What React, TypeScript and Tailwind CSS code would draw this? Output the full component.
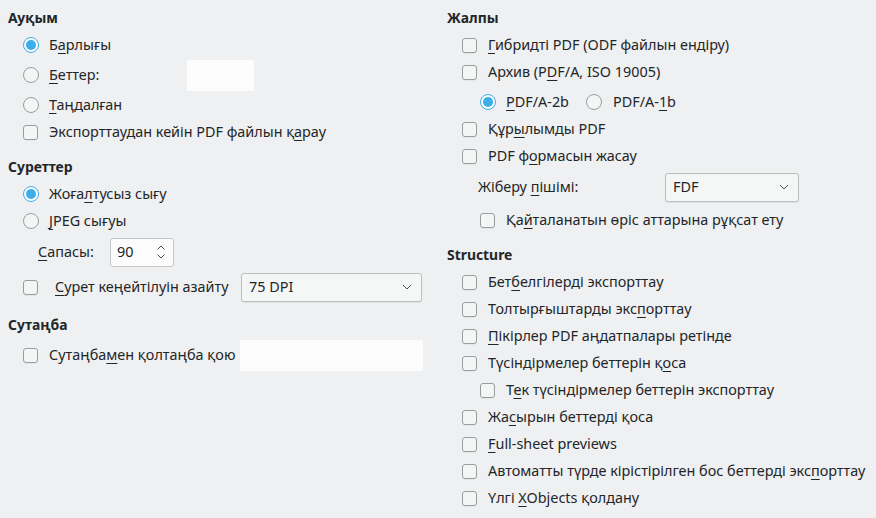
import React from "react";

const U = ({ c }: { c: string }) => (
  <span className="underline decoration-[1px] underline-offset-[3px]">{c}</span>
);

const Check = () => (
  <span className="inline-block w-[15px] h-[15px] shrink-0 rounded-[3px] border border-[#9a9c9f] bg-[#f4f5f5] shadow-[0_1px_0_rgba(0,0,0,0.04)]" />
);

const Radio = ({ on }: { on?: boolean }) =>
  on ? (
    <svg width="16" height="16" viewBox="0 0 16 16" className="shrink-0">
      <circle cx="8" cy="8" r="7.5" fill="#fcfcfc" stroke="#3daee9" strokeWidth="1" />
      <circle cx="8" cy="8" r="5" fill="#3daee9" />
    </svg>
  ) : (
    <svg width="16" height="16" viewBox="0 0 16 16" className="shrink-0">
      <circle cx="8" cy="8" r="7.5" fill="#f4f5f5" stroke="#9a9c9f" strokeWidth="1" />
    </svg>
  );

const Chevron = () => (
  <svg width="10" height="6" viewBox="0 0 10 6" className="shrink-0">
    <path d="M1 1 L5 5 L9 1" fill="none" stroke="#4d4f52" strokeWidth="1" />
  </svg>
);

const Combo = ({ text, w }: { text: string; w: string }) => (
  <div
    className={`${w} h-[29px] flex items-center justify-between pl-[7px] pr-[9px] rounded-[3px] border border-[#bcbec0] bg-[#f5f6f6] shadow-[0_1px_1px_rgba(0,0,0,0.06)]`}
  >
    <span>{text}</span>
    <Chevron />
  </div>
);

const Header = ({ children, cls = "" }: { children: React.ReactNode; cls?: string }) => (
  <div className={`h-[20px] flex items-center font-bold text-[13.9px] ${cls}`}>{children}</div>
);

export default function App() {
  return (
    <div
      className="w-[876px] h-[518px] bg-[#eff0f1] text-[#232629] text-[14.4px] flex overflow-hidden"
      style={{ fontFamily: '"Noto Sans", sans-serif' }}
    >
      {/* Left column */}
      <div className="w-[439px] shrink-0 pl-[8px] pt-[8px] flex flex-col">
        <Header>Ауқым</Header>
        <div className="mt-[2px] h-[30px] flex items-center pl-[15px] gap-[10px]">
          <Radio on />
          <span>
            Б<U c="а" />рлығы
          </span>
        </div>
        <div className="h-[30px] flex items-center pl-[15px] gap-[10px]">
          <Radio />
          <span className="w-[128px]">
            <U c="Б" />еттер:
          </span>
          <div className="w-[67px] h-[31px] bg-[#fcfcfc]" />
        </div>
        <div className="h-[30px] flex items-center pl-[15px] gap-[10px]">
          <Radio />
          <span>
            <U c="Т" />аңдалған
          </span>
        </div>
        <div className="h-[24px] flex items-center pl-[15px] gap-[11px]">
          <Check />
          <span>
            Экспорттаудан кейін PDF файлын қ<U c="а" />рау
          </span>
        </div>

        <Header cls="mt-[13px]">Суреттер</Header>
        <div className="mt-[4px] h-[26px] flex items-center pl-[15px] gap-[10px]">
          <Radio on />
          <span>
            Жоға<U c="л" />тусыз сығу
          </span>
        </div>
        <div className="mt-[1px] h-[26px] flex items-center pl-[15px] gap-[10px]">
          <Radio />
          <span>
            <U c="J" />PEG сығуы
          </span>
        </div>
        <div className="mt-[2px] h-[32px] flex items-center pl-[30px]">
          <span className="w-[72px]">
            <U c="С" />апасы:
          </span>
          <div className="w-[64px] h-[29px] flex items-center justify-between pl-[6px] pr-[7px] rounded-[3px] border border-[#c3c5c7] bg-[#fcfcfc]">
            <span>90</span>
            <svg width="10" height="16" viewBox="0 0 10 16">
              <path d="M1.5 5.5 L5 2 L8.5 5.5" fill="none" stroke="#4d4f52" strokeWidth="1" />
              <path d="M1.5 10.5 L5 14 L8.5 10.5" fill="none" stroke="#4d4f52" strokeWidth="1" />
            </svg>
          </div>
        </div>
        <div className="mt-[3px] h-[32px] flex items-center pl-[15px]">
          <Check />
          <span className="ml-[17px] w-[186px] whitespace-nowrap">
            <U c="С" />урет кеңейтілуін азайту
          </span>
          <Combo text="75 DPI" w="w-[181px]" />
        </div>

        <Header cls="mt-[12px]">Сутаңба</Header>
        <div className="mt-[4px] h-[32px] flex items-center pl-[15px]">
          <Check />
          <span className="ml-[11px] w-[191px] whitespace-nowrap">
            Сутаңба<U c="м" />ен қолтаңба қою
          </span>
          <div className="w-[183px] h-[31px] bg-[#fcfcfc]" />
        </div>
      </div>

      {/* Right column */}
      <div className="flex-1 pl-[8px] pt-[8px] flex flex-col whitespace-nowrap">
        <Header>Жалпы</Header>
        <div className="mt-[4px] h-[26px] flex items-center pl-[15px] gap-[11px]">
          <Check />
          <span>
            <U c="Г" />ибридті PDF (ODF файлын ендіру)
          </span>
        </div>
        <div className="mt-[1px] h-[26px] flex items-center pl-[15px] gap-[11px]">
          <Check />
          <span>
            Архив (P<U c="D" />F/A, ISO 19005)
          </span>
        </div>
        <div className="mt-[3px] h-[28px] flex items-center pl-[33px]">
          <Radio on />
          <span className="ml-[10px] w-[80px]">
            <U c="P" />DF/A-2b
          </span>
          <Radio />
          <span className="ml-[11px]">
            PDF/A-<U c="1" />b
          </span>
        </div>
        <div className="h-[26px] flex items-center pl-[15px] gap-[11px]">
          <Check />
          <span>
            Құр<U c="ы" />лымды PDF
          </span>
        </div>
        <div className="mt-[1px] h-[26px] flex items-center pl-[15px] gap-[11px]">
          <Check />
          <span>
            PDF ф<U c="о" />рмасын жасау
          </span>
        </div>
        <div className="mt-[2px] h-[32px] flex items-center pl-[31px]">
          <span className="w-[187px]">
            Жіберу <U c="п" />ішімі:
          </span>
          <Combo text="FDF" w="w-[134px]" />
        </div>
        <div className="mt-[4px] h-[26px] flex items-center pl-[33px] gap-[11px]">
          <Check />
          <span>
            Қа<U c="й" />таланатын өріс аттарына рұқсат ету
          </span>
        </div>

        <Header cls="mt-[12px]">Structure</Header>
        {[
          <>Бет<U c="б" />елгілерді экспорттау</>,
          <>Толтырғыштарды экс<U c="п" />орттау</>,
          <><U c="П" />ікірлер PDF аңдатпалары ретінде</>,
          <>Түсіндірмелер беттерін қ<U c="о" />са</>,
          null,
          <>Жа<U c="с" />ырын беттерді қоса</>,
          <><U c="F" />ull-sheet previews</>,
          <>Автоматты түрде кірістірілген бос беттерді экс<U c="п" />орттау</>,
          <>Үлгі <U c="X" />Objects қолдану</>,
        ].map((t, i) =>
          t === null ? (
            <div key={i} className="mt-[1px] h-[26px] flex items-center pl-[33px] gap-[11px]">
              <Check />
              <span>
                Т<U c="е" />к түсіндірмелер беттерін экспорттау
              </span>
            </div>
          ) : (
            <div
              key={i}
              className={`${i === 0 ? "mt-[4px]" : "mt-[1px]"} h-[26px] flex items-center pl-[15px] gap-[11px]`}
            >
              <Check />
              <span>{t}</span>
            </div>
          )
        )}
      </div>
    </div>
  );
}
